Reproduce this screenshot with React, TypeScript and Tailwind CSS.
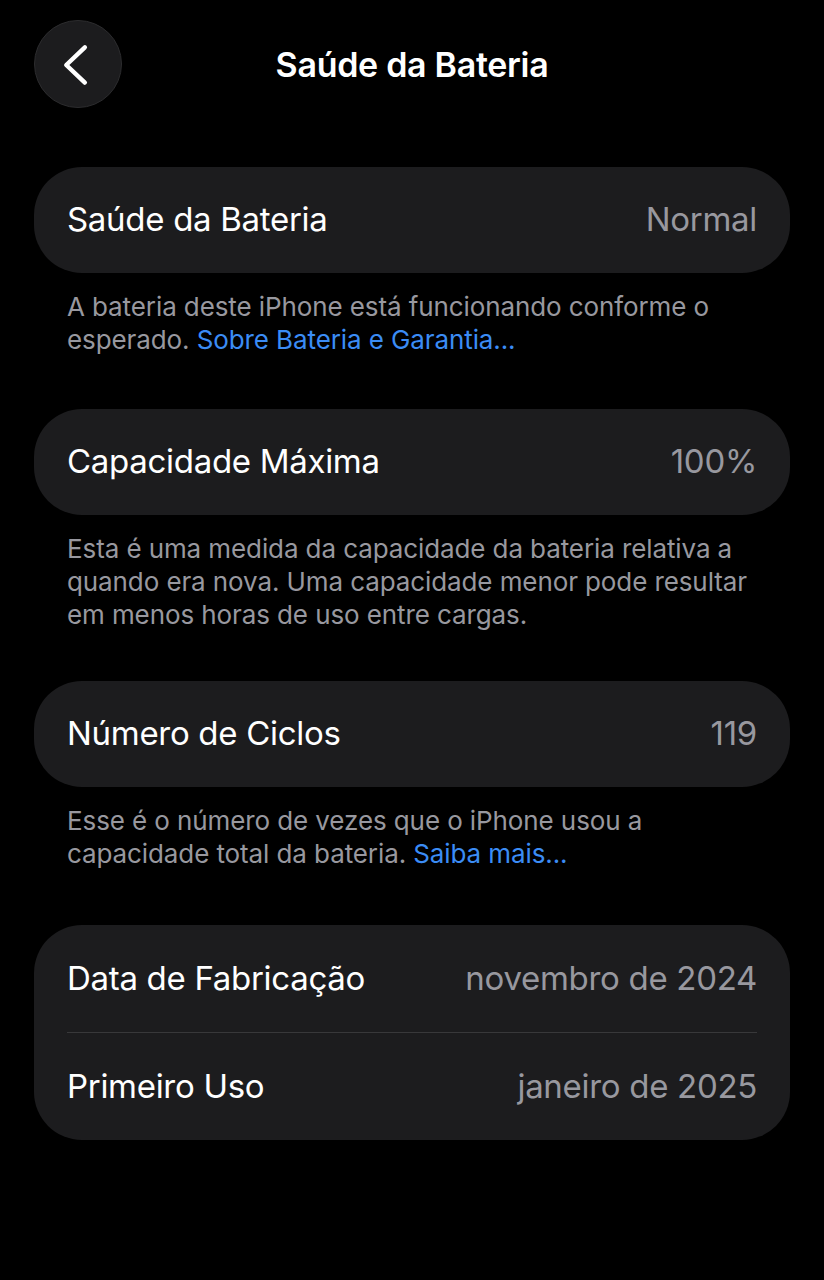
type Row = { label: string; value: string };

const font = { fontFamily: "Inter, 'Noto Sans', sans-serif" };

function Card({ rows, rowH = "h-[106px]" }: { rows: Row[]; rowH?: string }) {
  return (
    <div className="rounded-[48px] bg-[#1c1c1e] px-[33px]">
      {rows.map((r, i) => (
        <div key={r.label}>
          {i > 0 && <div className="h-px bg-[#38383a]" />}
          <div className={`flex ${rowH} items-center justify-between`}>
            <span className="text-[33px] text-white tracking-[-0.3px]">{r.label}</span>
            <span className="text-[33px] text-[#98989f] tracking-[-0.3px]">{r.value}</span>
          </div>
        </div>
      ))}
    </div>
  );
}

function Note({ children }: { children: React.ReactNode }) {
  return (
    <p className="px-[33px] pt-[17px] text-[26px] leading-[33px] text-[#98989f] tracking-[-0.1px]">
      {children}
    </p>
  );
}

export default function App() {
  return (
    <div className="min-h-screen bg-black px-[34px] pt-[20px]" style={font}>
      <header className="grid h-[88px] grid-cols-[88px_1fr_88px] items-center">
        <button className="flex h-[88px] w-[88px] items-center justify-center rounded-full border border-[#2c2c2e] bg-[#1c1c1e] text-white">
          <svg width="88" height="88" viewBox="0 0 88 88" fill="none">
            <polyline
              points="51,27 32,45 51,63"
              stroke="currentColor"
              strokeWidth="4.5"
              strokeLinecap="round"
              strokeLinejoin="round"
            />
          </svg>
        </button>
        <h1 className="text-center text-[34px] font-semibold text-white tracking-[-0.3px]">
          Saúde da Bateria
        </h1>
        <div />
      </header>

      <main className="mt-[59px] flex flex-col">
        <section>
          <Card rows={[{ label: "Saúde da Bateria", value: "Normal" }]} />
          <Note>
            A bateria deste iPhone está funcionando conforme o esperado.{" "}
            <span className="text-[#3b8cf5]">Sobre Bateria e Garantia...</span>
          </Note>
        </section>

        <section className="mt-[53px]">
          <Card rows={[{ label: "Capacidade Máxima", value: "100%" }]} />
          <Note>
            Esta é uma medida da capacidade da bateria relativa a quando era nova. Uma
            capacidade menor pode resultar em menos horas de uso entre cargas.
          </Note>
        </section>

        <section className="mt-[50px]">
          <Card rows={[{ label: "Número de Ciclos", value: "119" }]} />
          <Note>
            Esse é o número de vezes que o iPhone usou a capacidade total da bateria.{" "}
            <span className="text-[#3b8cf5]">Saiba mais...</span>
          </Note>
        </section>

        <section className="mt-[55px]">
          <Card
            rowH="h-[107px]"
            rows={[
              { label: "Data de Fabricação", value: "novembro de 2024" },
              { label: "Primeiro Uso", value: "janeiro de 2025" },
            ]}
          />
        </section>
      </main>
    </div>
  );
}
